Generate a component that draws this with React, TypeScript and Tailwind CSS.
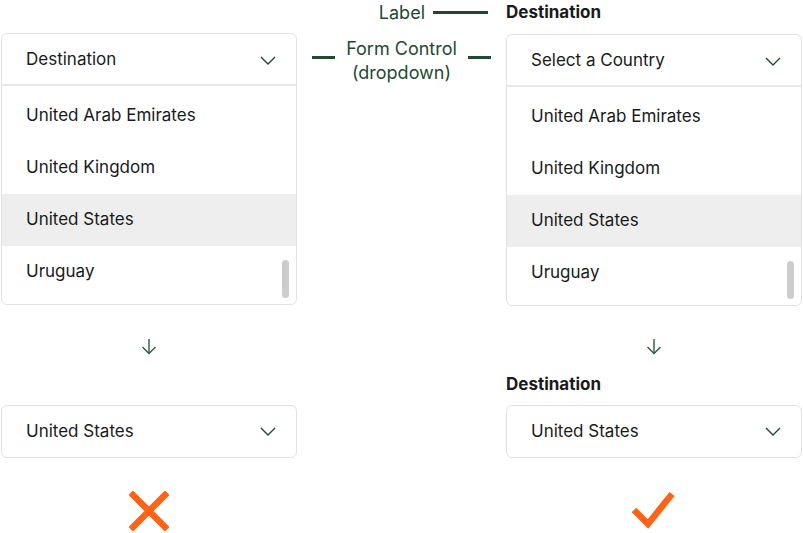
const GREEN = "#1e4a33";

function Chevron() {
  return (
    <svg width="16" height="9" viewBox="0 0 16 9" fill="none">
      <polyline points="1,1 8,8 15,1" stroke={GREEN} strokeWidth="1.4" />
    </svg>
  );
}

function DownArrow() {
  return (
    <svg width="16" height="17" viewBox="0 0 16 17" fill="none">
      <line x1="8" y1="1" x2="8" y2="15.5" stroke="#2d5a40" strokeWidth="1.4" />
      <polyline points="1.5,9 8,15.5 14.5,9" stroke="#2d5a40" strokeWidth="1.4" />
    </svg>
  );
}

function Cross() {
  return (
    <svg width="40" height="40" viewBox="0 0 40 40">
      <path d="M4 4 L36 36 M36 4 L4 36" stroke="#ff6316" strokeWidth="6.5" strokeLinecap="square" />
    </svg>
  );
}

function Check() {
  return (
    <svg width="48" height="42" viewBox="0 0 48 42">
      <polyline points="4,20 18,34 42,4" fill="none" stroke="#ff6316" strokeWidth="6.5" />
    </svg>
  );
}

const COUNTRIES = ["United Arab Emirates", "United Kingdom", "United States", "Uruguay"];

function OpenDropdown({ placeholder }: { placeholder: string }) {
  return (
    <div className="relative h-[272px] overflow-hidden rounded-md border border-[#e2e2e2] bg-white">
      <div className="flex h-[52px] items-center justify-between border-b-2 border-[#e8e8e8] pl-6 pr-5 pt-[2px]">
        <span>{placeholder}</span>
        <Chevron />
      </div>
      <div className="pt-[4px]">
        {COUNTRIES.map((c) => (
          <div
            key={c}
            className={`flex h-[52px] items-center pl-6 ${c === "United States" ? "bg-[#eeeeee]" : ""}`}
          >
            {c}
          </div>
        ))}
      </div>
      {/* scrollbar */}
      <div className="absolute right-[7px] top-[226px] h-[38px] w-[7px] rounded-full bg-[#cccccc]" />
    </div>
  );
}

function ClosedSelect({ value }: { value: string }) {
  return (
    <div className="flex h-[53px] items-center justify-between rounded-md border border-[#e2e2e2] bg-white pl-6 pr-5">
      <span>{value}</span>
      <Chevron />
    </div>
  );
}

export default function App() {
  return (
    <div
      className="flex h-[533px] w-[803px] bg-white pl-px text-[17px] text-[#1a1a1a]"
      style={{ fontFamily: "Inter, 'Noto Sans', sans-serif" }}
    >
      {/* Wrong */}
      <div className="flex w-[296px] flex-col">
        <div className="h-[33px]" />
        <OpenDropdown placeholder="Destination" />
        <div className="flex h-[100px] justify-center pt-[33px]">
          <DownArrow />
        </div>
        <ClosedSelect value="United States" />
        <div className="flex justify-center pt-[33px]">
          <Cross />
        </div>
      </div>

      {/* Annotations */}
      <div className="flex w-[209px] flex-col text-[18px] text-[#1e4a33]">
        <div className="flex h-[24px] items-center justify-end gap-2 pr-[18px]">
          <span>Label</span>
          <div className="h-[3px] w-[55px] bg-[#1e4a33]" />
        </div>
        <div className="mt-[13px] flex items-start justify-between px-[15px]">
          <div className="mt-[19px] h-[3px] w-[23px] bg-[#1e4a33]" />
          <div className="text-center leading-[24px]">
            Form Control
            <br />
            (dropdown)
          </div>
          <div className="mt-[19px] h-[3px] w-[23px] bg-[#1e4a33]" />
        </div>
      </div>

      {/* Right */}
      <div className="flex w-[296px] flex-col">
        <div className="flex h-[34px] items-start font-bold leading-[24px]">Destination</div>
        <OpenDropdown placeholder="Select a Country" />
        <div className="flex h-[99px] flex-col">
          <div className="flex justify-center pt-[32px]">
            <DownArrow />
          </div>
          <div className="mt-auto pb-[11px] font-bold leading-[20px]">Destination</div>
        </div>
        <ClosedSelect value="United States" />
        <div className="flex justify-center pt-[32px]">
          <Check />
        </div>
      </div>
    </div>
  );
}
